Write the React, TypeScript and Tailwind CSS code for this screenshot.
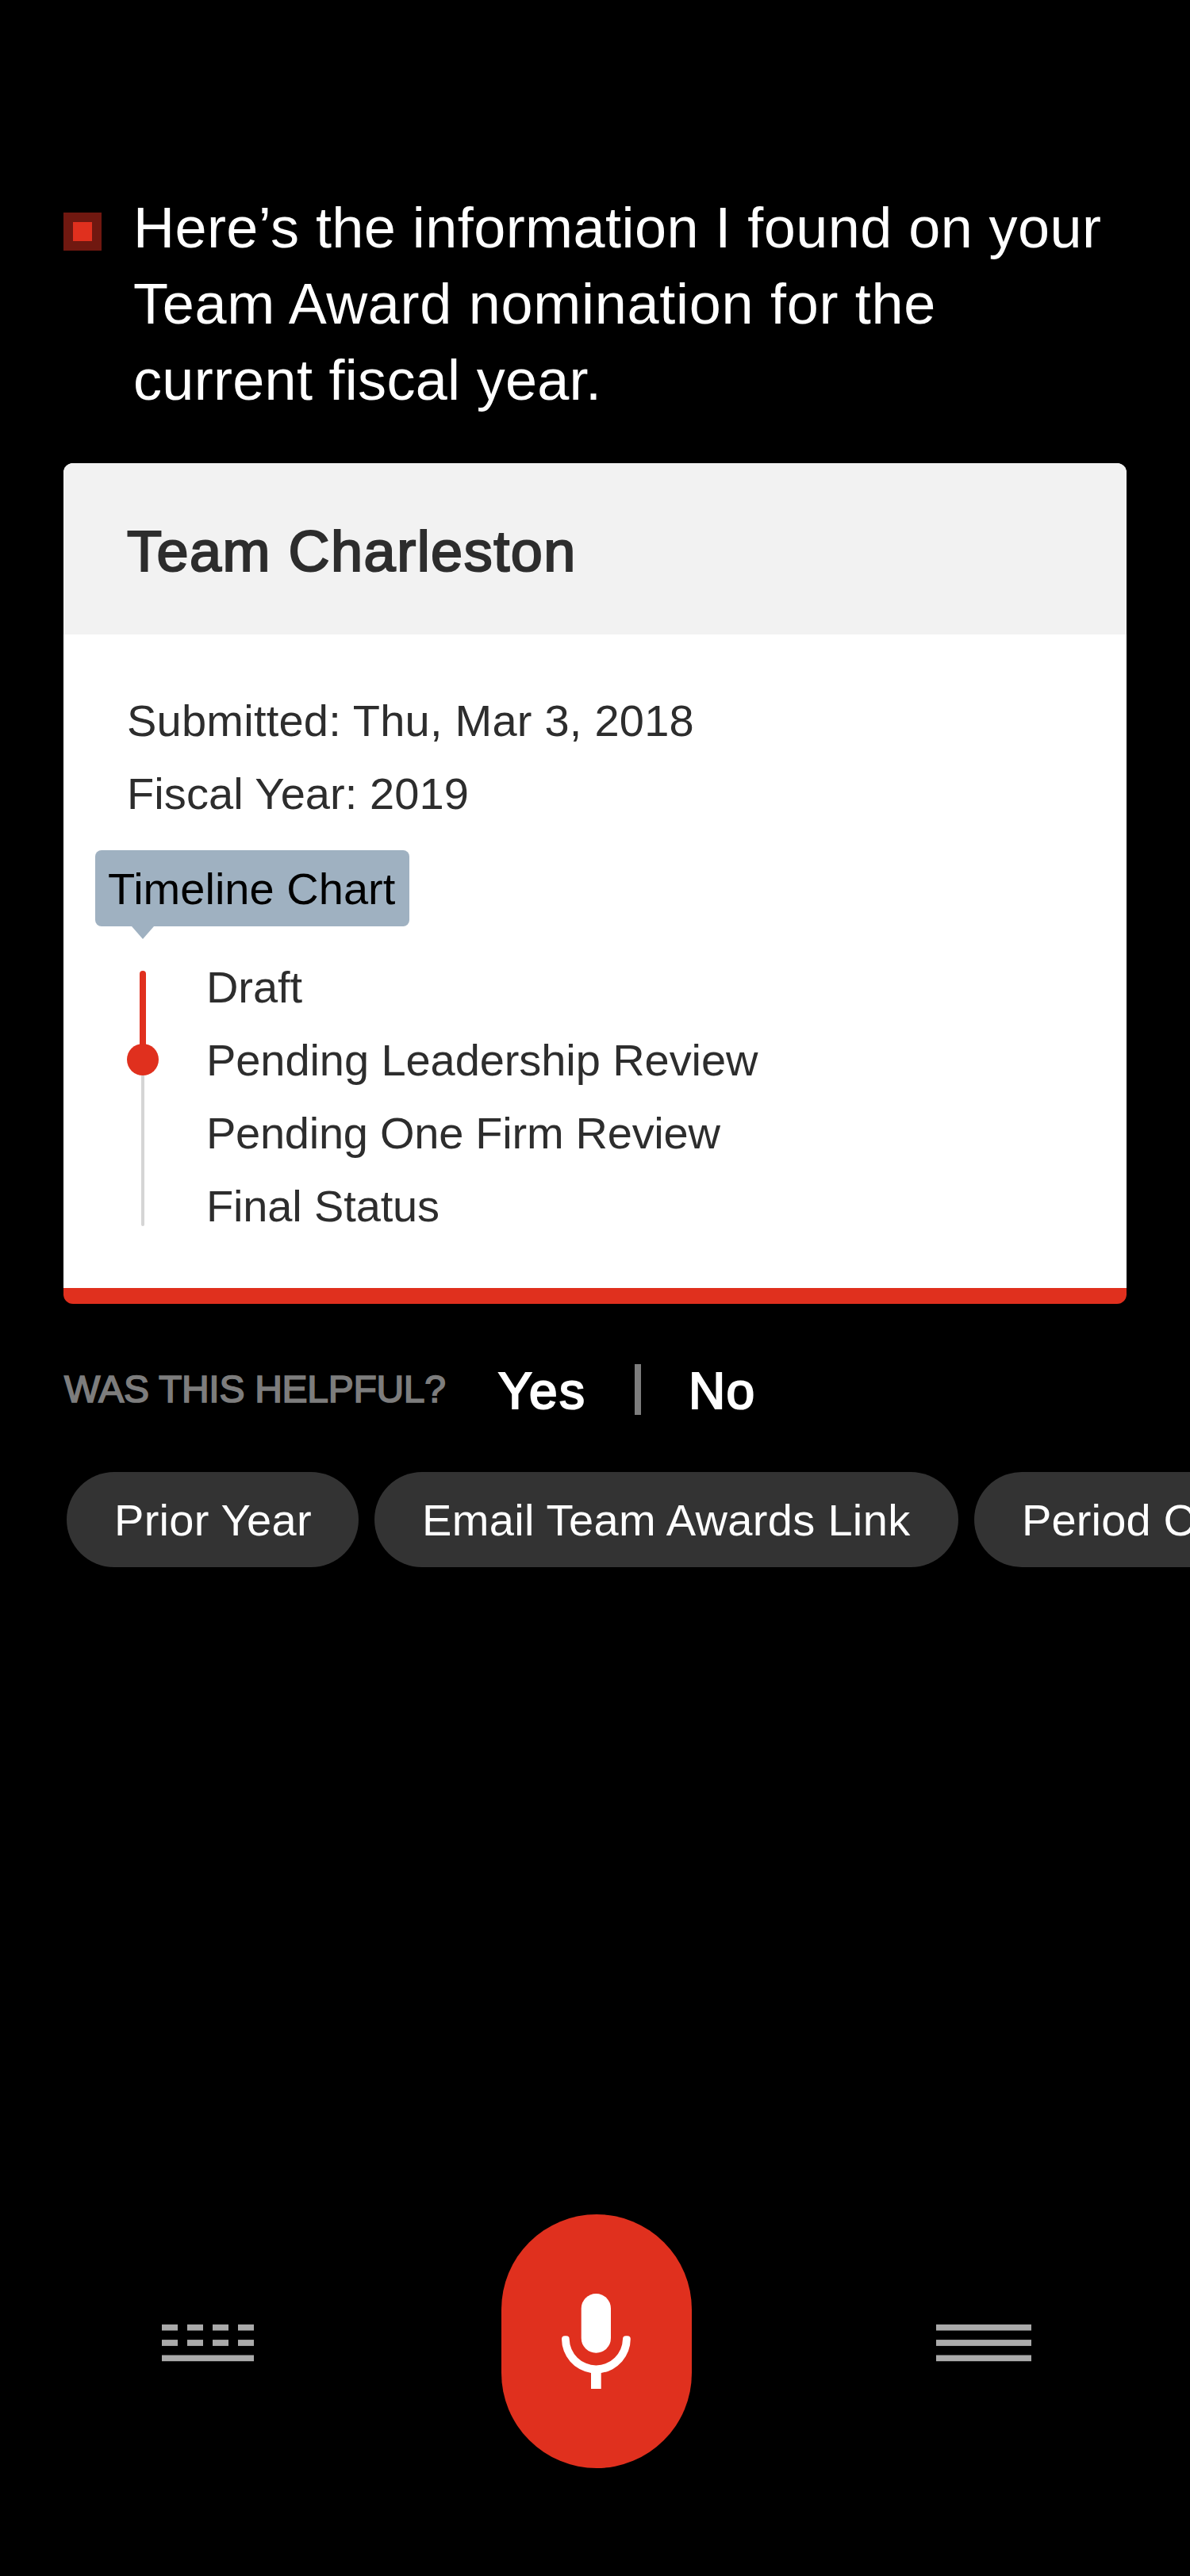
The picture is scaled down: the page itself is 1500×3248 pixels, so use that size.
function StatusMark() {
  return (
    <div className="mt-[29px] flex size-12 shrink-0 items-center justify-center bg-[#701810]">
      <div className="size-6 bg-[#e0301e]" />
    </div>
  );
}

function Tooltip() {
  return (
    <div className="relative mt-[25px] ml-10 h-24 w-[396px] rounded-lg bg-[#9fb1c1] pt-[17px] pl-4 text-black">
      <span className="block leading-[63px] tracking-[0.02px]">Timeline Chart</span>
      <svg className="absolute top-24 left-[46px]" width="28" height="16" viewBox="0 0 28 16">
        <path d="M0 0H28L14 16Z" fill="#9fb1c1" />
      </svg>
    </div>
  );
}

function Timeline() {
  return (
    <div className="mt-[31px] flex pl-20">
      <div className="mt-[25px] flex w-10 flex-col items-center">
        <div className="h-[96px] w-2 rounded-t-full bg-[#e0301e]" />
        <div className="-mt-1 size-10 shrink-0 rounded-full bg-[#e0301e]" />
        <div className="h-[190px] w-1 rounded-b-full bg-[#d5d5d5]" />
      </div>
      <ul className="ml-[60px] leading-[91px]">
        <li className="h-[92px] tracking-[-0.1px]">Draft</li>
        <li className="h-[92px] tracking-[-0.08px]">Pending Leadership Review</li>
        <li className="h-[92px] tracking-[-0.26px]">Pending One Firm Review</li>
        <li className="h-[92px] tracking-[-0.15px]">Final Status</li>
      </ul>
    </div>
  );
}

function AwardCard() {
  return (
    <section className="mx-20 mt-[57px] h-[1060px] overflow-hidden rounded-xl border-b-20 border-[#e0301e] bg-white text-[56px] text-[#2d2d2d]">
      <header className="h-[216px] bg-[#f2f2f2] pt-[71px] pl-20">
        <h1 className="text-[72px] leading-[80px] font-normal tracking-[1.5px] [-webkit-text-stroke:2.2px_#2d2d2d]">
          Team Charleston
        </h1>
      </header>
      <div className="pt-[63px]">
        <div className="pl-20 leading-[91px]">
          <p className="h-[92px] tracking-[0.23px]">Submitted: Thu, Mar 3, 2018</p>
          <p className="h-[92px] tracking-[0.08px]">Fiscal Year: 2019</p>
        </div>
        <Tooltip />
        <Timeline />
      </div>
    </section>
  );
}

function Feedback() {
  return (
    <div className="mt-[76px] flex h-16 pl-[81px]">
      <span className="w-[547px] text-[48px] leading-[63px] tracking-[-0.28px] whitespace-nowrap text-[#7d7d7d] [-webkit-text-stroke:1.7px_#7d7d7d]">
        WAS THIS HELPFUL?
      </span>
      <button className="w-[172px] text-left text-[64px] leading-[68px] tracking-[2.3px] text-white [-webkit-text-stroke:2.2px_white]">
        Yes
      </button>
      <div className="h-16 w-2 bg-[#7d7d7d]" />
      <button className="ml-[60px] text-[64px] leading-[68px] tracking-[1.4px] text-white [-webkit-text-stroke:2.2px_white]">
        No
      </button>
    </div>
  );
}

function Suggestions() {
  return (
    <div className="mt-[72px] flex gap-5 overflow-hidden pl-[84px] text-[56px] leading-[121px] whitespace-nowrap text-white">
      <button className="h-[120px] w-[368px] shrink-0 rounded-full bg-[#333333] pl-[60px] text-left tracking-[0.3px]">
        Prior Year
      </button>
      <button className="h-[120px] w-[736px] shrink-0 rounded-full bg-[#333333] pl-[60px] text-left tracking-[0.34px]">
        Email Team Awards Link
      </button>
      <button className="h-[120px] w-[368px] shrink-0 rounded-full bg-[#333333] pl-[60px] text-left tracking-[0.14px]">
        Period C
      </button>
    </div>
  );
}

function KeyboardIcon() {
  return (
    <svg width="116" height="48" viewBox="0 0 116 48" fill="#aaaaaa">
      {[0, 32, 64, 96].map((x) => (
        <g key={x}>
          <rect x={x} y="0.8" width="20" height="7.7" />
          <rect x={x} y="20.1" width="20" height="7.8" />
        </g>
      ))}
      <rect y="39.5" width="116" height="7.7" />
    </svg>
  );
}

function MenuIcon() {
  return (
    <svg width="120" height="48" viewBox="0 0 120 48" fill="#aaaaaa">
      <rect y="0.8" width="120" height="7.7" />
      <rect y="20.1" width="120" height="7.8" />
      <rect y="39.5" width="120" height="7.7" />
    </svg>
  );
}

function MicIcon() {
  return (
    <svg width="88" height="120" viewBox="0 0 88 120" fill="white">
      <rect x="24.7" y="0" width="37.3" height="74.7" rx="18.65" />
      <path d="M4 53.3H5.7Q9.7 53.3 9.7 57.3A33.75 33.75 0 0 0 43.35 90.4A33.75 33.75 0 0 0 77 57.3Q77 53.3 81 53.3H82.8Q86.8 53.3 86.8 57.3A43.4 43.4 0 0 1 49.7 100V120H37V100A43.4 43.4 0 0 1 0 57.3Q0 53.3 4 53.3Z" />
    </svg>
  );
}

function BottomBar() {
  return (
    <nav className="mt-auto mb-[136px] flex items-center pl-[204px]">
      <button className="mt-1" aria-label="Keyboard">
        <KeyboardIcon />
      </button>
      <button
        className="ml-[312px] flex h-80 w-60 justify-center rounded-full bg-[#e0301e] pt-[100px]"
        aria-label="Speak"
      >
        <MicIcon />
      </button>
      <button className="mt-1 ml-[308px]" aria-label="Menu">
        <MenuIcon />
      </button>
    </nav>
  );
}

export default function App() {
  return (
    <main className="flex h-[3248px] w-[1500px] flex-col overflow-hidden bg-black pt-[239px] font-['Liberation_Sans',Arial,sans-serif]">
      <div className="flex gap-10 pl-20">
        <StatusMark />
        <p className="text-[72px] leading-[96px] whitespace-nowrap text-white">
          <span className="block tracking-[0.45px]">Here’s the information I found on your</span>
          <span className="block tracking-[0.72px]">Team Award nomination for the</span>
          <span className="block tracking-[0.3px]">current fiscal year.</span>
        </p>
      </div>
      <AwardCard />
      <Feedback />
      <Suggestions />
      <BottomBar />
    </main>
  );
}
